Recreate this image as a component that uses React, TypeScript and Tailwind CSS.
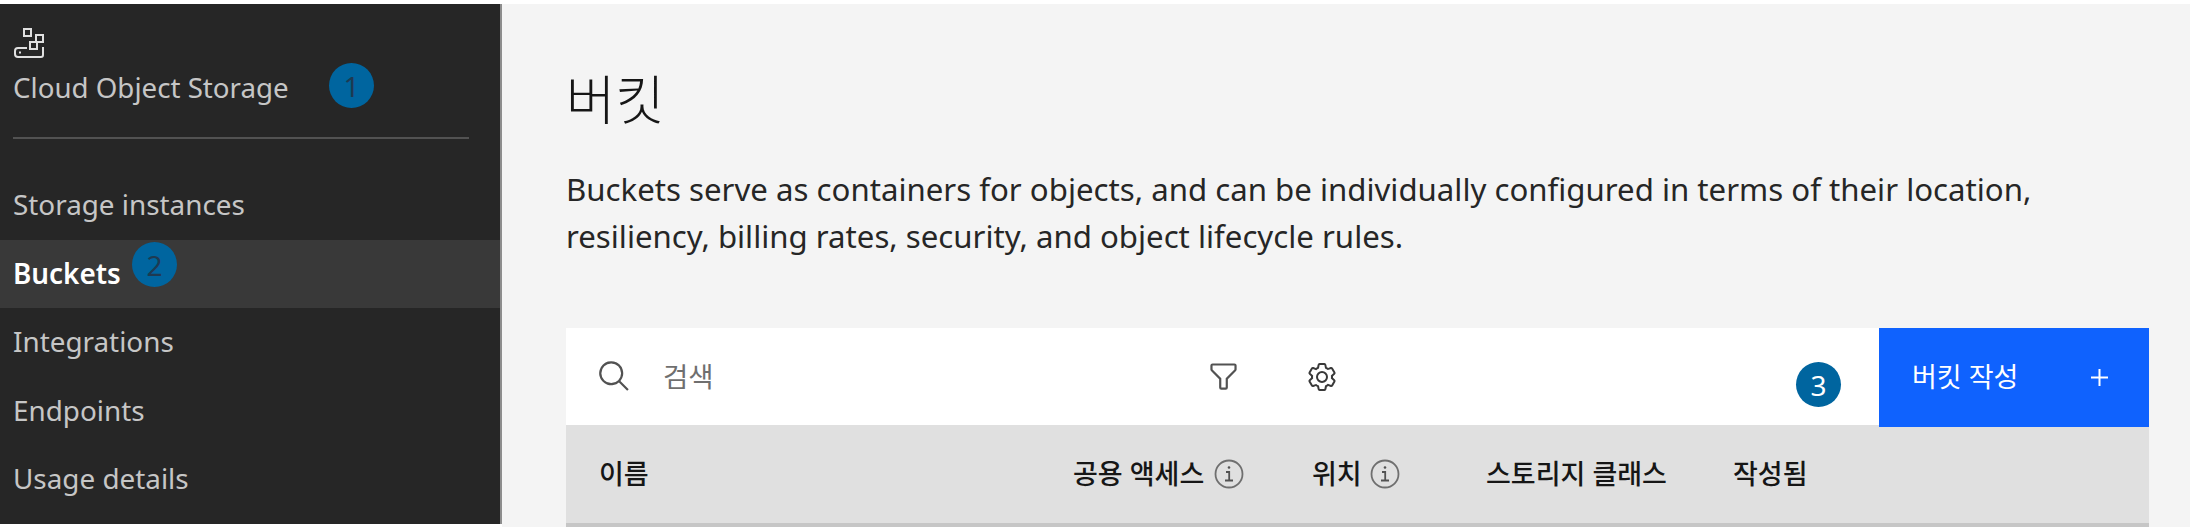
const FONT = "font-['Noto_Sans','Noto_Sans_CJK_KR',sans-serif]"

function BucketLogo() {
  return (
    <svg width="32" height="32" viewBox="0 0 32 32" fill="none" stroke="#e0e0e0" strokeWidth="2">
      <rect x="11" y="1" width="7" height="7" />
      <rect x="23" y="7" width="7" height="7" />
      <rect x="17" y="14" width="7" height="7" />
      <path d="M14 20H5a3 3 0 0 0-3 3v3a3 3 0 0 0 3 3h23a2 2 0 0 0 2-2v-8" />
      <rect x="6" y="23.5" width="2" height="2" fill="#e0e0e0" stroke="none" />
    </svg>
  )
}

function SearchIcon() {
  return (
    <svg width="35" height="35" viewBox="0 0 32 32" fill="#525252">
      <path d="M29 27.5859l-7.5521-7.5521a11.0177 11.0177 0 1 0-1.4141 1.4141L27.5859 29ZM4 13a9 9 0 1 1 9 9a9.01 9.01 0 0 1-9-9Z" />
    </svg>
  )
}

function FilterIcon() {
  return (
    <svg width="35" height="35" viewBox="0 0 32 32" fill="#525252">
      <path d="M18 28H14a2 2 0 0 1-2-2V18.41L4.59 11A2 2 0 0 1 4 9.59V6A2 2 0 0 1 6 4H26a2 2 0 0 1 2 2V9.59A2 2 0 0 1 27.41 11L20 18.41V26A2 2 0 0 1 18 28ZM6 6V9.59l8 8V26h4V17.59l8-8V6Z" />
    </svg>
  )
}

function GearIcon() {
  return (
    <svg width="32" height="32" viewBox="0 0 32 32" fill="#393939">
      <path d="M27,16.76c0-.25,0-.5,0-.76s0-.51,0-.77l1.92-1.68A2,2,0,0,0,29.3,11L26.94,7a2,2,0,0,0-1.73-1,2,2,0,0,0-.64.1l-2.43.82a11.35,11.35,0,0,0-1.31-.75l-.51-2.52a2,2,0,0,0-2-1.61H13.64a2,2,0,0,0-2,1.61l-.51,2.52a11.48,11.48,0,0,0-1.32.75L7.43,6.06A2,2,0,0,0,6.79,6,2,2,0,0,0,5.06,7L2.7,11a2,2,0,0,0,.41,2.51L5,15.24c0,.25,0,.5,0,.76s0,.51,0,.77L3.11,18.45A2,2,0,0,0,2.7,21L5.06,25a2,2,0,0,0,1.73,1,2,2,0,0,0,.64-.1l2.43-.82a11.35,11.35,0,0,0,1.31.75l.51,2.52a2,2,0,0,0,2,1.61h4.72a2,2,0,0,0,2-1.61l.51-2.52a11.48,11.48,0,0,0,1.32-.75l2.42.82a2,2,0,0,0,.64.1,2,2,0,0,0,1.73-1L29.3,21a2,2,0,0,0-.41-2.51ZM25.21,24l-3.43-1.16a8.86,8.86,0,0,1-2.71,1.57L18.36,28H13.64l-.71-3.55a9.36,9.36,0,0,1-2.7-1.57L6.79,24,4.43,20l2.72-2.4a8.9,8.9,0,0,1,0-3.13L4.43,12,6.79,8l3.43,1.16a8.86,8.86,0,0,1,2.71-1.57L13.64,4h4.72l.71,3.55a9.36,9.36,0,0,1,2.7,1.57L25.21,8,27.57,12l-2.72,2.4a8.9,8.9,0,0,1,0,3.13L27.57,20Z" />
      <path d="M16,22a6,6,0,1,1,6-6A5.94,5.94,0,0,1,16,22Zm0-10a3.91,3.91,0,0,0-4,4,3.91,3.91,0,0,0,4,4,3.91,3.91,0,0,0,4-4A3.91,3.91,0,0,0,16,12Z" />
    </svg>
  )
}

function InfoIcon() {
  return (
    <svg width="30" height="30" viewBox="0 0 30 30" fill="none" stroke="#6f6f6f" strokeWidth="1.8">
      <circle cx="15" cy="15" r="13.5" />
      <path d="M12 13h3.2v8M11 21.5h8" stroke="#525252" />
      <circle cx="15" cy="8.5" r="1.3" fill="#525252" stroke="none" />
    </svg>
  )
}

function PlusIcon() {
  return (
    <svg width="17" height="17" viewBox="0 0 17 17" stroke="#ffffff" strokeWidth="2">
      <path d="M8.5 0v17M0 8.5h17" />
    </svg>
  )
}

function Badge({ n, className }: { n: number; className: string }) {
  return (
    <span
      className={`absolute w-[45px] h-[45px] rounded-full bg-[#00659f] flex items-center justify-center text-[28px] ${n === 3 ? 'text-white' : 'text-[#1e3a52]'} ${className}`}
    >
      {n}
    </span>
  )
}

const navItems = ['Storage instances', 'Buckets', 'Integrations', 'Endpoints', 'Usage details']

export default function App() {
  return (
    <div className={`${FONT} relative w-[2190px] h-[527px] overflow-hidden bg-white pt-[4px] flex`}>
      {/* Sidebar */}
      <aside className="w-[502px] h-[520px] shrink-0 bg-[#262626] border-r-2 border-[#8d8d8d]">
        <div className="px-[13px] pt-[24px]">
          <BucketLogo />
          <div className="text-[27.7px] leading-[38px] mt-[8px] text-[#c6c6c6]">Cloud Object Storage</div>
          <div className="h-[2px] w-[456px] bg-[#525252] mt-[31px]" />
        </div>
        <nav className="mt-[32px]">
          {navItems.map((item) => (
            <div
              key={item}
              className={`h-[68.5px] flex items-center px-[13px] text-[27.85px] ${
                item === 'Buckets' ? 'bg-[#393939] text-white font-semibold' : 'text-[#c6c6c6]'
              }`}
            >
              {item}
            </div>
          ))}
        </nav>
      </aside>

      {/* Main */}
      <main className="flex-1 bg-[#f4f4f4] pl-[64px] pr-[41px] pt-[63px]">
        <h1 className="text-[53.5px] leading-[66px] font-light text-[#161616]">버킷</h1>
        <p className="mt-[33px] text-[31.2px] leading-[47px] text-[#262626]">
          Buckets serve as containers for objects, and can be individually configured in terms of their location,
          <br />
          resiliency, billing rates, security, and object lifecycle rules.
        </p>

        <div className="mt-[68px]">
          <div className="h-[97px] bg-white flex items-center">
            <div className="w-[640px] flex items-center pl-[31px]">
              <SearchIcon />
              <span className="ml-[31px] text-[27.5px] text-[#6f6f6f]">검색</span>
            </div>
            <div className="flex items-center gap-[65px]">
              <FilterIcon />
              <GearIcon />
            </div>
            <button className="ml-auto w-[270px] h-[99px] self-start bg-[#0f62fe] text-white flex items-center justify-between pl-[33px] pr-[41px] text-[27px]">
              <span>버킷 작성</span>
              <PlusIcon />
            </button>
          </div>
          <div className="h-[102px] bg-[#e0e0e0] border-b-4 border-[#c6c6c6] flex items-center pl-[33px] text-[27px] font-medium text-[#161616]">
            <span className="w-[474px]">이름</span>
            <span className="w-[239px] flex items-center gap-[10px]">공용 액세스 <InfoIcon /></span>
            <span className="w-[174px] flex items-center gap-[8px]">위치 <InfoIcon /></span>
            <span className="w-[247px]">스토리지 클래스</span>
            <span>작성됨</span>
          </div>
        </div>
      </main>

      <Badge n={1} className="left-[329px] top-[63px]" />
      <Badge n={2} className="left-[132px] top-[242px]" />
      <Badge n={3} className="left-[1796px] top-[362px]" />
    </div>
  )
}
